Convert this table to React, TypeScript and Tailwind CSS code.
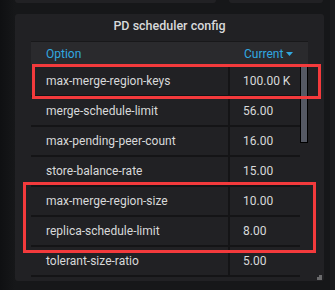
import React from 'react';

const rows: [string, string][] = [
  ['max-merge-region-keys', '100.00 K'],
  ['merge-schedule-limit', '56.00'],
  ['max-pending-peer-count', '16.00'],
  ['store-balance-rate', '15.00'],
  ['max-merge-region-size', '10.00'],
  ['replica-schedule-limit', '8.00'],
  ['tolerant-size-ratio', '5.00'],
];

export default function App() {
  return (
    <div className="relative w-[335px] h-[290px] overflow-hidden bg-[#161719] font-['Roboto',sans-serif] text-[12px] text-[#d8d9da]">
      {/* left shade and right strip of the dashboard */}
      <div className="absolute left-0 top-0 w-[15px] h-full bg-gradient-to-r from-[#0f1012] to-[#161719]" />
      <div className="absolute right-0 top-0 w-[5px] h-full bg-[#1b1c1f]" />

      {/* bottoms of the panels above */}
      <div className="flex h-[3px] pl-[15px] gap-[13px]">
        <div className="w-[201px] bg-[#212124] rounded-b-[3px]" />
        <div className="w-[94px] bg-[#212124] rounded-b-[3px]" />
      </div>

      {/* panel */}
      <div className="relative ml-[15px] mt-[11px] w-[309px] h-[267px] rounded-[3px] bg-[#212124]">
        <div className="pt-[4px] h-[27px] text-center leading-[16px] text-[12.5px] font-medium text-[#d8d9da]">
          PD scheduler config
        </div>

        <div className="ml-[16px] w-[277px]">
          <div className="flex h-[23px] border-t border-[#18181a] bg-[#2a2a2d] leading-[16px] text-[#31a8e0]">
            <div className="w-[201px] pl-[15px] pt-[4px]">Option</div>
            <div className="flex pt-[4px] pl-[12px] items-start gap-[3px]">
              <span>Current</span>
              <svg width="7" height="4" viewBox="0 0 7 4" className="mt-[6px]">
                <path d="M0 0h7L3.5 4z" fill="#31a8e0" />
              </svg>
            </div>
          </div>

          <div className="flex">
            <div className="w-[269px] pt-[3px]">
              {rows.map(([name, value]) => (
                <div key={name} className="flex h-[30px] border-b-2 border-[#141416] leading-[28px]">
                  <div className="w-[199px] pl-[15px] border-r-2 border-[#141416]">{name}</div>
                  <div className="pl-[13px]">{value}</div>
                </div>
              ))}
            </div>
          </div>
        </div>

        {/* scrollbar thumb */}
        <div className="absolute left-[285px] top-[52px] w-[8px] h-[77px] bg-[#555964] border border-black" />

        {/* resize handle */}
        <div className="absolute right-[2px] bottom-[1px] w-[5px] h-[5px] border-r-[3px] border-b-[3px] border-[#6a6a6c]" />
      </div>

      {/* highlight boxes */}
      <div className="absolute left-[32px] top-[64px] w-[289px] h-[35px] border-[3px] border-[#f33a3c]" />
      <div className="absolute left-[23px] top-[182px] w-[293px] h-[71px] border-[3px] border-[#f33a3c]" />
    </div>
  );
}
